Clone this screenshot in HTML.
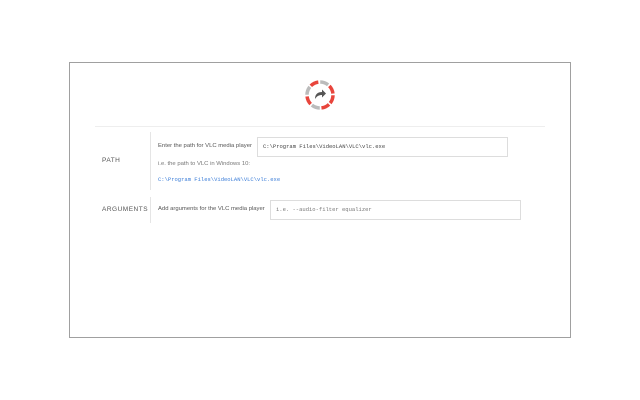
<!DOCTYPE html>
<html><head><style>
body{margin:0;width:640px;height:400px;background:#fff;font-family:"Liberation Sans",sans-serif;position:relative;overflow:hidden}
.box{position:absolute;left:69px;top:62px;width:500px;height:274px;border:1px solid #a0a0a0}
.a{position:absolute}
.lbl{font-size:6.5px;color:#555;letter-spacing:0.5px}
.t{font-size:5.9px;color:#555}
.inp{position:absolute;border:1px solid #ddd;font-family:"Liberation Mono",monospace;font-size:5.5px;color:#444;box-sizing:border-box;padding-left:5px;line-height:18px}
</style></head><body>
<div class="box"></div>
<svg class="a" style="left:300px;top:75px" width="40" height="40" viewBox="0 0 40 40">
<g fill="none" stroke-width="3.5">
<circle cx="20" cy="20" r="13" stroke="#e8453c" stroke-dasharray="8.5 100" transform="rotate(-135 20 20)"/>
<circle cx="20" cy="20" r="13" stroke="#bbb" stroke-dasharray="8.5 100" transform="rotate(-89 20 20)"/>
<circle cx="20" cy="20" r="13" stroke="#e8453c" stroke-dasharray="8.5 100" transform="rotate(-44 20 20)"/>
<circle cx="20" cy="20" r="13" stroke="#e8453c" stroke-dasharray="8.5 100" transform="rotate(1 20 20)"/>
<circle cx="20" cy="20" r="13" stroke="#e8453c" stroke-dasharray="8.5 100" transform="rotate(46 20 20)"/>
<circle cx="20" cy="20" r="13" stroke="#bbb" stroke-dasharray="8.5 100" transform="rotate(91 20 20)"/>
<circle cx="20" cy="20" r="13" stroke="#e8453c" stroke-dasharray="8.5 100" transform="rotate(136 20 20)"/>
<circle cx="20" cy="20" r="13" stroke="#bbb" stroke-dasharray="8.5 100" transform="rotate(181 20 20)"/>
</g>
<path d="M15 24 C15 19 18 17 22 17 V14.5 L26 18.5 L22 22.5 V20 C19 20 17 21 15 24Z" fill="#555"/>
</svg>
<div class="a" style="left:95px;top:126px;width:450px;height:1px;background:#eee"></div>
<div class="a" style="left:150px;top:132px;width:1px;height:58px;background:#e5e5e5"></div>
<div class="a" style="left:150px;top:197px;width:1px;height:26px;background:#e5e5e5"></div>
<div class="a lbl" style="left:102px;top:157px">PATH</div>
<div class="a lbl" style="left:102px;top:206px">ARGUMENTS</div>
<div class="a t" style="left:158px;top:143px">Enter the path for VLC media player</div>
<div class="inp" style="left:257px;top:137px;width:251px;height:20px">C:\Program Files\VideoLAN\VLC\vlc.exe</div>
<div class="a t" style="left:158px;top:161px;color:#777">i.e. the path to VLC in Windows 10:</div>
<div class="a" style="left:158px;top:176px;font-family:'Liberation Mono',monospace;font-size:5.5px;color:#3b7dd8">C:\Program Files\VideoLAN\VLC\vlc.exe</div>
<div class="a t" style="left:158px;top:206px">Add arguments for the VLC media player</div>
<div class="inp" style="left:270px;top:200px;width:251px;height:20px;color:#777">i.e. --audio-filter equalizer</div>
</body></html>
